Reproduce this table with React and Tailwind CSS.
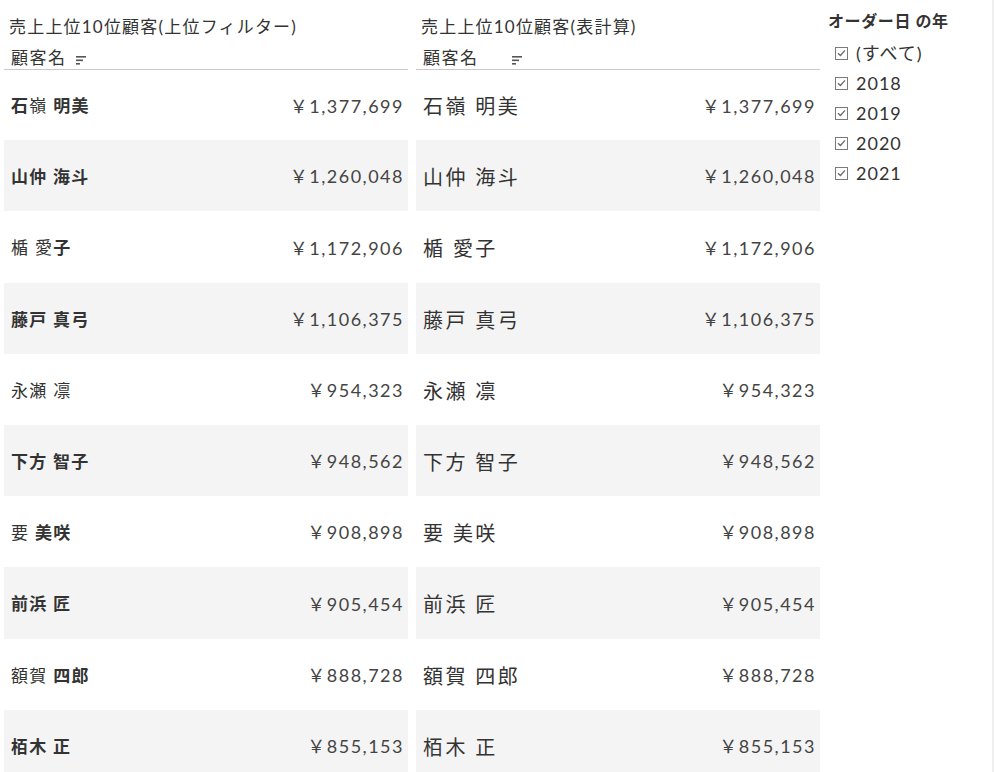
import React from "react";

const FONT = { fontFamily: 'Lato, "Noto Sans CJK JP", sans-serif' };

const rows = [
  { name: [["石", 1], ["嶺", 0], [" ", 0], ["明美", 1]], plain: "石嶺 明美", value: "￥1,377,699" },
  { name: [["山仲 海斗", 1]], plain: "山仲 海斗", value: "￥1,260,048" },
  { name: [["楯 愛", 0], ["子", 1]], plain: "楯 愛子", value: "￥1,172,906" },
  { name: [["藤戸 真弓", 1]], plain: "藤戸 真弓", value: "￥1,106,375" },
  { name: [["永瀬 凛", 0]], plain: "永瀬 凛", value: "￥954,323" },
  { name: [["下方 智子", 1]], plain: "下方 智子", value: "￥948,562" },
  { name: [["要 ", 0], ["美咲", 1]], plain: "要 美咲", value: "￥908,898" },
  { name: [["前浜 匠", 1]], plain: "前浜 匠", value: "￥905,454" },
  { name: [["額賀 ", 0], ["四郎", 1]], plain: "額賀 四郎", value: "￥888,728" },
  { name: [["栢木 正", 1]], plain: "栢木 正", value: "￥855,153" },
];

const heights = [70, 71, 72, 71, 71, 71, 71, 72, 71, 71];

function SortIcon() {
  return (
    <svg width="11" height="9" viewBox="0 0 11 9" className="shrink-0">
      <rect x="0" y="0" width="10" height="1.6" fill="#555" />
      <rect x="0" y="3.5" width="7" height="1.6" fill="#555" />
      <rect x="0" y="7" width="4" height="1.6" fill="#555" />
    </svg>
  );
}

function Table({ title, right }) {
  return (
    <div className="w-[404px] shrink-0 flex flex-col">
      <div className="h-[42px] shrink-0 flex items-center pl-[5px] pt-[12px] text-[17px] tracking-[1.2px] text-[#333] whitespace-nowrap">
        {title}
      </div>
      <div className="h-[27px] shrink-0 flex items-center pl-[7px] pt-[4px] text-[17px] tracking-[1.5px] text-[#333]">
        <span>顧客名</span>
        <span className={right ? "ml-[33px] mt-[5px]" : "ml-[9px] mt-[5px]"}>
          <SortIcon />
        </span>
      </div>
      <div className="h-px shrink-0 bg-[#c9c9c9]" />
      {rows.map((r, i) => (
        <div
          key={i}
          style={{ height: heights[i] }}
          className={
            "shrink-0 flex items-center justify-between pl-[7px] pr-[4px] pt-[2px] " +
            (i % 2 === 1 ? "bg-[#f4f4f4]" : "bg-white")
          }
        >
          {right ? (
            <span className="text-[20px] tracking-[2.4px] text-[#333] whitespace-nowrap">{r.plain}</span>
          ) : (
            <span className="text-[17px] tracking-[1.3px] text-[#333] whitespace-nowrap">
              {r.name.map(([t, b], j) => (
                <span key={j} className={b ? "font-bold" : "font-normal"}>
                  {t}
                </span>
              ))}
            </span>
          )}
          <span className="text-[18px] tracking-[1.5px] text-[#444] whitespace-nowrap">{r.value}</span>
        </div>
      ))}
    </div>
  );
}

function Check({ label }) {
  return (
    <div className="h-[30px] flex items-center pl-[7px]">
      <span className="w-[13px] h-[13px] border border-[#7a7a7a] bg-white flex items-center justify-center shrink-0">
        <svg width="9" height="8" viewBox="0 0 9 8">
          <path d="M1 4.2 L3.4 6.4 L8 1.4" stroke="#6b6b6b" strokeWidth="1.4" fill="none" />
        </svg>
      </span>
      <span className="ml-[8px] text-[18px] tracking-[1px] text-[#333] whitespace-nowrap">{label}</span>
    </div>
  );
}

export default function App() {
  return (
    <div style={FONT} className="w-[994px] h-[772px] overflow-hidden bg-white flex">
      <div className="w-[992px] h-full flex overflow-hidden">
        <div className="w-[4px] shrink-0" />
        <Table title={<>売上上位10位顧客(上位フィルター)</>} />
        <div className="w-[8px] shrink-0" />
        <Table title={<>売上上位10位顧客(表計算)</>} right />
        <div className="w-[8px] shrink-0" />
        <div className="flex flex-col">
          <div className="h-[38px] flex items-center pt-[4px] text-[16px] font-bold tracking-[0.6px] text-[#333] whitespace-nowrap">
            オーダー日 の年
          </div>
          <Check label="(すべて)" />
          <Check label="2018" />
          <Check label="2019" />
          <Check label="2020" />
          <Check label="2021" />
        </div>
      </div>
      <div className="w-[2px] h-full bg-[#efefef]" />
    </div>
  );
}
